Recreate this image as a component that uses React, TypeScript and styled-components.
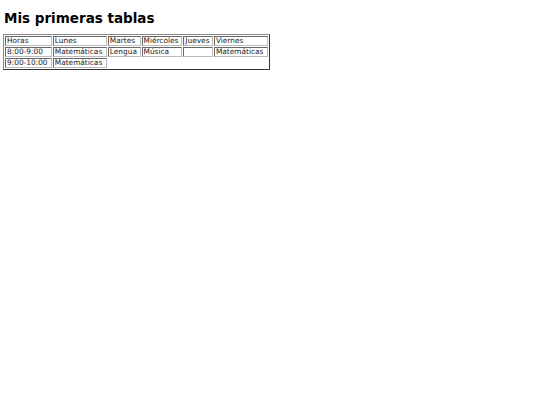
import React from "react";
import styled, { createGlobalStyle } from "styled-components";

const Global = createGlobalStyle`
  body { margin: 4px 3px; background: #fff; font-family: "DejaVu Sans", Verdana, sans-serif; color: #000; }
`;

const Title = styled.h1`
  font-family: "DejaVu Sans", Verdana, sans-serif;
  font-size: 13.5px;
  font-weight: bold;
  line-height: 16px;
  margin: 6px 1px 8px;
`;

const Table = styled.table`
  width: 267px;
  border: 1px outset #888;
  border-spacing: 1px;
  font-size: 7.4px;
  font-family: "DejaVu Sans", Verdana, sans-serif;
`;

const Cell = styled.td`
  border: 1px inset #bbb;
  padding: 0 1px;
  height: 8px;
  line-height: 8px;
  color: #222;
`;

const rows = [
  ["Horas", "Lunes", "Martes", "Miércoles", "Jueves", "Viernes"],
  ["8:00-9:00", "Matemáticas", "Lengua", "Música", "", "Matemáticas"],
  ["9:00-10:00", "Matemáticas"],
];

export default function App() {
  return (
    <>
      <Global />
      <Title>Mis primeras tablas</Title>
      <Table>
        <tbody>
          {rows.map((r, i) => (
            <tr key={i}>
              {r.map((c, j) => (
                <Cell key={j}>{c}</Cell>
              ))}
            </tr>
          ))}
        </tbody>
      </Table>
    </>
  );
}
